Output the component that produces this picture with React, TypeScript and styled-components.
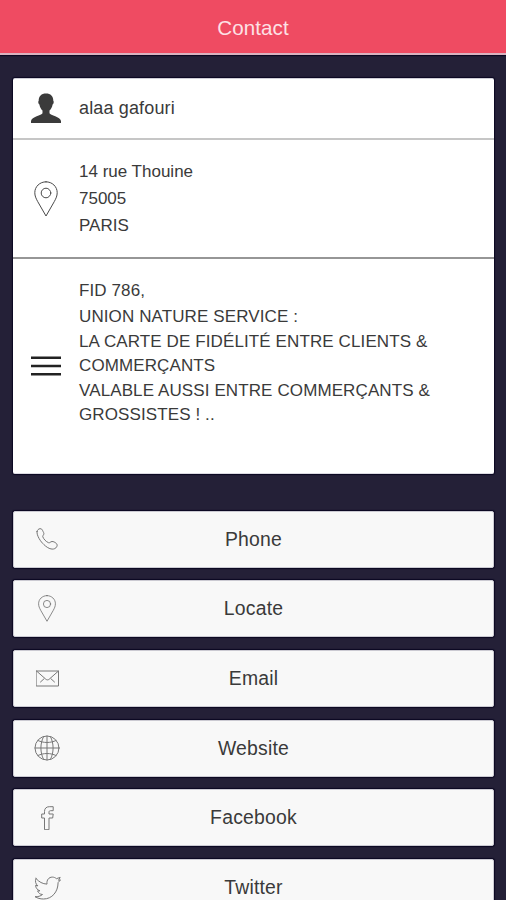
import React from "react";
import styled, { createGlobalStyle } from "styled-components";

const GlobalStyle = createGlobalStyle`
  * { box-sizing: border-box; }
  html, body { margin: 0; padding: 0; background: #242037; }
`;

const Screen = styled.div`
  width: 100%;
  height: 900px;
  overflow: hidden;
  background: #242037;
  font-family: "Liberation Sans", Arial, sans-serif;
  color: #3a3a3a;
`;

const Header = styled.header`
  height: 55px;
  display: flex;
  align-items: center;
  justify-content: center;
  background: #ef4b62;
  border-bottom: 2px solid #d9b3c0;
  box-shadow: 0 1px 1px #0b0722;
`;

const Title = styled.h1`
  margin: 0;
  padding-top: 3px;
  font-size: 20.6px;
  font-weight: 400;
  letter-spacing: 0.1px;
  color: #fde1e5;
`;

const Content = styled.main`
  padding: 23px 12px 0 13px;
`;

const Card = styled.section`
  height: 396px;
  background: #fff;
  border-radius: 2px;
  box-shadow: 0 0 1px 1px #0b0722;
  border: solid #dcdbe2;
  border-width: 1px 0;
  border-top-color: #cfced6;
`;

const InfoRow = styled.div<{ $height: number; $divider?: string }>`
  height: ${(p) => p.$height}px;
  display: grid;
  grid-template-columns: 66px 1fr;
  align-items: center;
  border-bottom: ${(p) => (p.$divider ? `2px solid ${p.$divider}` : "none")};
`;

const InfoIcon = styled.div`
  display: flex;
  justify-content: center;
`;

const PersonSlot = styled(InfoIcon)`
  padding-bottom: 2px;
`;

const Name = styled.div`
  font-size: 18px;
  letter-spacing: 0.15px;
`;

const Lines = styled.div<{ $leading: number }>`
  font-size: 17px;
  line-height: ${(p) => p.$leading}px;
  white-space: nowrap;
`;

const Address = styled(Lines)`
  padding-top: 2px;
`;

const Description = styled(Lines)`
  align-self: start;
  padding-top: 19px;
  letter-spacing: 0.11px;
`;

const FirstLine = styled.div`
  line-height: 26px;
  padding-bottom: 1px;
`;

const Actions = styled.nav`
  margin-top: 36.6px;
  display: flex;
  flex-direction: column;
  gap: 12.7px;
`;

const ActionButton = styled.button`
  flex: none;
  height: 57px;
  padding: 0;
  display: grid;
  grid-template-columns: 66px 1fr 66px;
  align-items: center;
  border: 1px solid #cbcad2;
  border-radius: 2px;
  background: #f8f8f8;
  box-shadow: 0 0 1px 1px #0b0722;
  font-family: inherit;
  font-size: 19.4px;
  letter-spacing: 0.2px;
  color: #3a3a3a;
`;

const ActionIcon = styled.span`
  display: flex;
  justify-content: center;
`;

const LineArt = styled.svg<{ $color?: string }>`
  display: block;
  fill: none;
  stroke: ${(p) => p.$color ?? "#777"};
  stroke-width: 1;
  stroke-linejoin: round;
  stroke-linecap: round;
`;

const PersonIcon = () => (
  <svg width="30" height="30" viewBox="0 0 30 30" fill="#3b3b3b">
    <path d="M15 .5c4.600 0 7.400 2.700 7.300 7.300.8.4.5 3-.7 3.700-.5 2.800-1.600 4.700-3.100 6.100v2.700c.8 2.400 10.900 3.200 11.500 7.700V30H0v-2c.6-4.500 10.700-5.300 11.500-7.700v-2.700c-1.500-1.400-2.600-3.300-3.100-6.100-1.200-.7-1.500-3.300-.7-3.700C7.600 3.200 10.400.5 15 .5z" />
  </svg>
);

const PinIcon = ({ width, height, color }: { width: number; height: number; color: string }) => (
  <LineArt width={width} height={height} viewBox="0 0 24 36" $color={color}>
    <path d="M12 .8C5.600.8.800 5.700.800 11.700c0 3.200 1.200 5.700 2.800 8.700L12 35l8.400-14.600c1.600-3 2.800-5.500 2.800-8.700C23.200 5.700 18.400.8 12 .8z" />
    <circle cx="12" cy="12" r="4.800" />
  </LineArt>
);

const MenuIcon = () => (
  <svg width="30" height="20" viewBox="0 0 30 20" stroke="#222" strokeWidth="2.6">
    <path d="M0 1.700h30M0 10h30M0 18.300h30" />
  </svg>
);

const PhoneIcon = () => (
  <LineArt width="22" height="22" viewBox="0 0 22 22">
    <path d="M1 3.600C1.200 2 2.600.8 4 .7c1.500-.1 2.200.8 2.700 2 .5 1.300 1.500 2.300 1.100 3.500C7.400 7.300 6.500 7.800 6.800 8.800c.8 2.300 3.300 4.900 5.700 5.900 1.400.5 1.900-1.100 3.500-1.200 1.400 0 2.500.5 3.900 1.600 1.400 1 1.600 2.300.8 3.700-.9 1.600-2.600 2.400-4.600 2.300-2.900-.1-6-2.400-8.200-4.500C4.800 13.800.500 7.700 1 3.600z" />
  </LineArt>
);

const MailIcon = () => (
  <LineArt width="23" height="17" viewBox="0 0 23 17">
    <path d="M.5 1h22v15H.5zM.5 1l9.300 8.200c1.100.9 2.300.9 3.400 0L22.500 1M4.500 12 8 8.800M18.500 12 15 8.800" />
  </LineArt>
);

const GlobeIcon = () => (
  <LineArt width="26" height="26" viewBox="0 0 26 26">
    <circle cx="13" cy="13" r="12" />
    <path d="M13 1v24M1 13h24M4 5.500c5.500 2.700 12.500 2.700 18 0M4 20.500c5.500-2.700 12.500-2.700 18 0M9.500 1.700C6 8.500 6 17.500 9.500 24.300M16.500 1.700c3.500 6.800 3.500 15.800 0 22.600" />
  </LineArt>
);

const FacebookIcon = () => (
  <LineArt width="13" height="24" viewBox="0 0 13 24">
    <path d="M3.500 23.300V12H.7V8h2.800V5.500C3.500 2.300 5.500.7 8.300.7h3.900v4H9.500C8.500 4.700 8 5.200 8 6.100V8h4.200l-.5 4H8v11.300z" />
  </LineArt>
);

const TwitterIcon = () => (
  <LineArt width="27" height="24" viewBox="0 0 27 24">
    <path d="M2 2.500c3 3.500 6.600 5.400 11 5.600-.6-4.200 2-7 5.300-7 1.700 0 3 .6 4.100 1.600l3.800-1.300-1.700 2.900 2-.4-2.400 2.700C24 16 18 23 9.500 23c-3.300 0-6-.8-8.500-2.300 3 .2 5.500-.6 7.500-2.200-2.500-.1-4.100-1.500-4.900-3.600l2.300-.1C3.200 13.800 1.700 12 1.600 9.300l2.300.6C1.500 7.900.8 5.200 2 2.500z" />
  </LineArt>
);

const actions = [
  { label: "Phone", icon: <PhoneIcon /> },
  { label: "Locate", icon: <PinIcon width={18} height={27} color="#666" /> },
  { label: "Email", icon: <MailIcon /> },
  { label: "Website", icon: <GlobeIcon /> },
  { label: "Facebook", icon: <FacebookIcon /> },
  { label: "Twitter", icon: <TwitterIcon /> },
];

export default function App() {
  return (
    <Screen>
      <GlobalStyle />
      <Header>
        <Title>Contact</Title>
      </Header>
      <Content>
        <Card>
          <InfoRow $height={61} $divider="#c6c6c6">
            <PersonSlot><PersonIcon /></PersonSlot>
            <Name>alaa gafouri</Name>
          </InfoRow>
          <InfoRow $height={119} $divider="#969696">
            <InfoIcon><PinIcon width={24} height={36} color="#4a4a4a" /></InfoIcon>
            <Address $leading={26.7}>
              14 rue Thouine<br />
              75005<br />
              PARIS
            </Address>
          </InfoRow>
          <InfoRow $height={214}>
            <InfoIcon><MenuIcon /></InfoIcon>
            <Description $leading={24.5}>
              <FirstLine>FID 786,</FirstLine>
              UNION NATURE SERVICE :<br />
              LA CARTE DE FIDÉLITÉ ENTRE CLIENTS &amp;<br />
              COMMERÇANTS<br />
              VALABLE AUSSI ENTRE COMMERÇANTS &amp;<br />
              GROSSISTES ! ..
            </Description>
          </InfoRow>
        </Card>
        <Actions>
          {actions.map(({ label, icon }) => (
            <ActionButton key={label}>
              <ActionIcon>{icon}</ActionIcon>
              <span>{label}</span>
            </ActionButton>
          ))}
        </Actions>
      </Content>
    </Screen>
  );
}
